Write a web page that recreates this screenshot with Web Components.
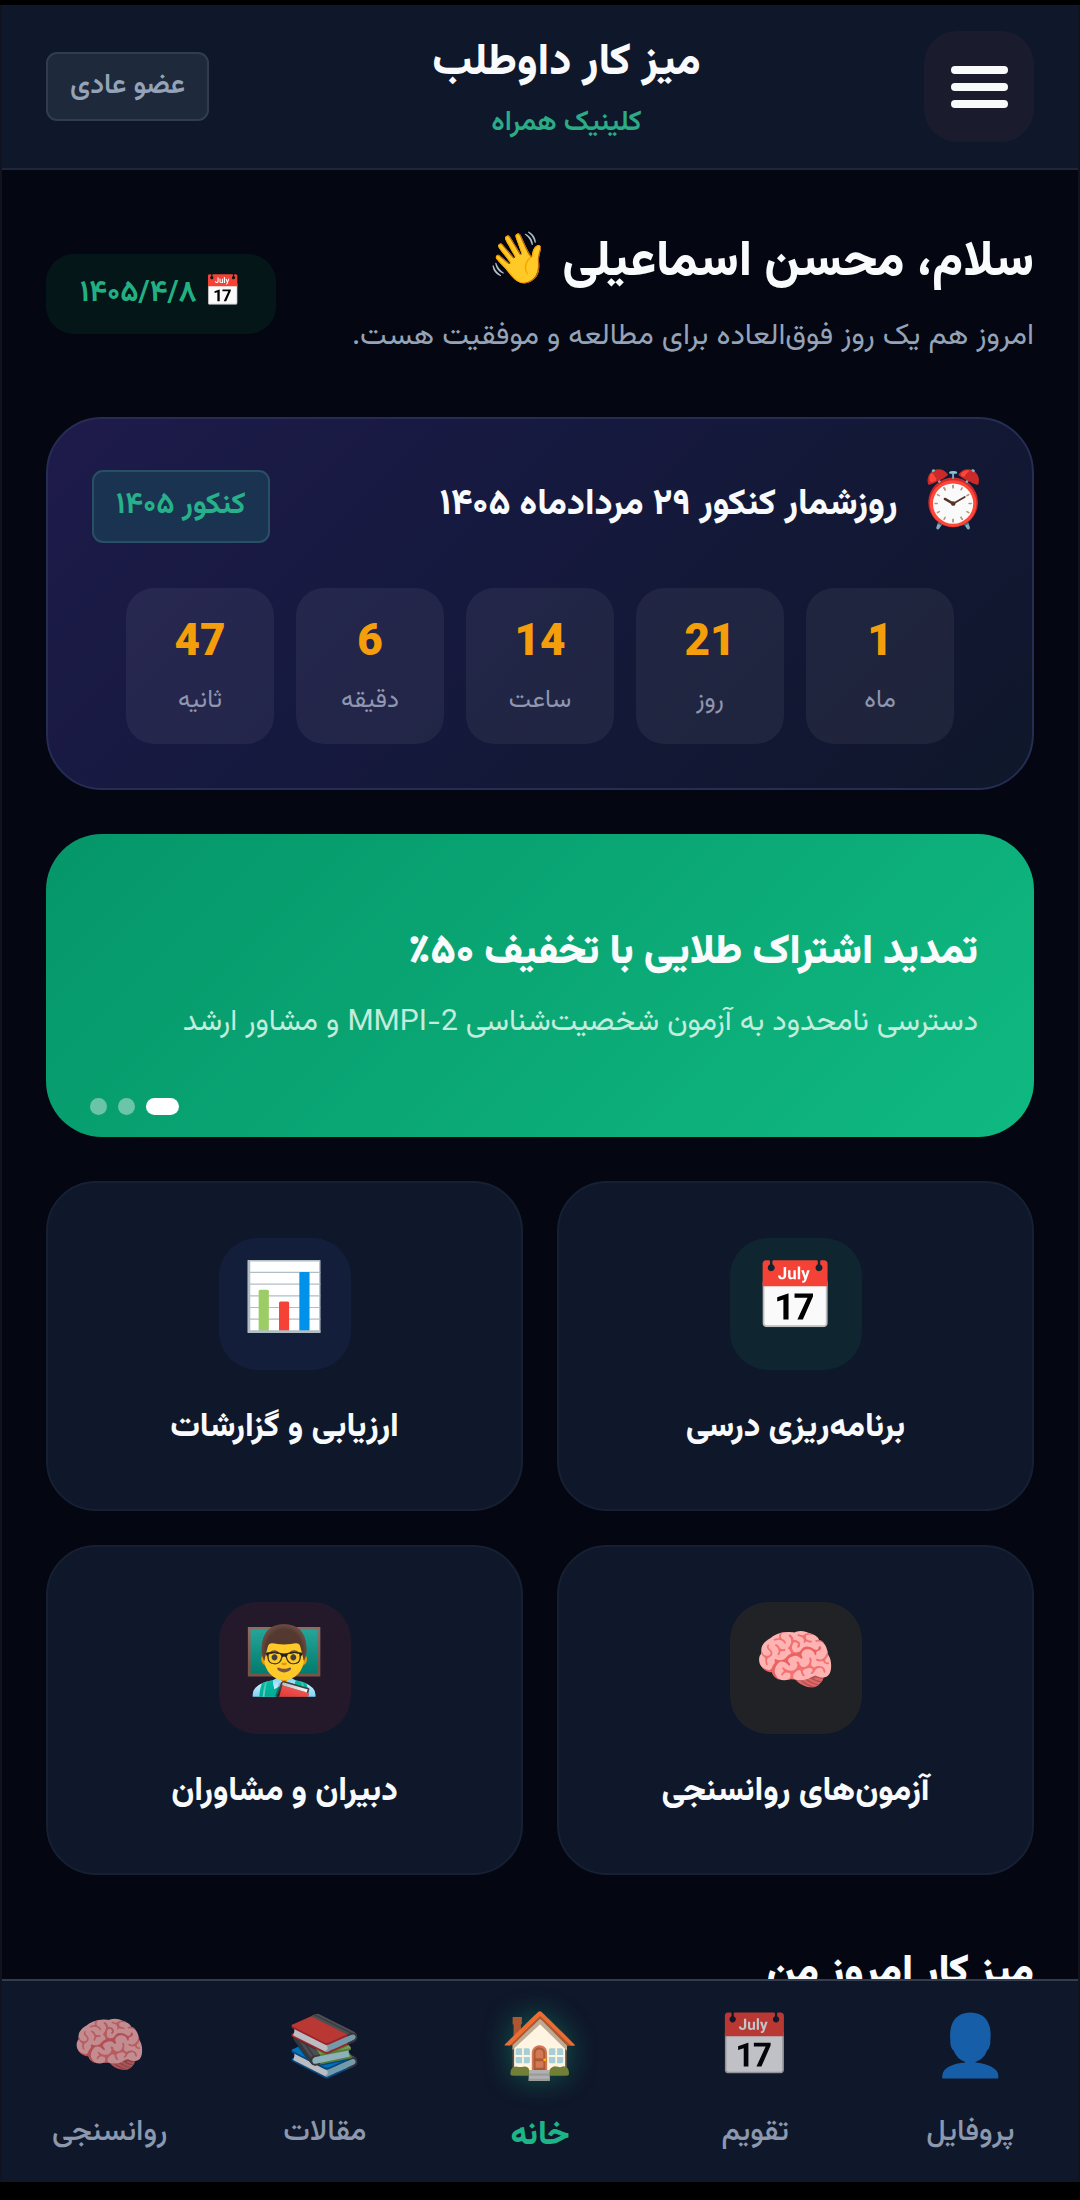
<!DOCTYPE html>
<html lang="fa" dir="rtl">
<head>
<meta charset="utf-8">
<meta name="viewport" content="width=device-width, initial-scale=1">
<title>میز کار داوطلب</title>
<style>
  :root {
    --bg: #040711;
    --surface: #0f172a;
    --line: #1e2637;
    --text: #f8fafc;
    --muted: #94a3b8;
    --green: #10b981;
    --amber: #f59e0b;
    --gutter: 44px;
  }
  body {
    margin: 0;
    background: #000;
    color: var(--text);
    font-family: Vazirmatn, "Noto Sans", "Noto Color Emoji", sans-serif;
  }
</style>
</head>
<body>

<desk-app>
  <desk-header slot="header" heading="میز کار داوطلب" sub="کلینیک همراه">
    <desk-badge slot="end">عضو عادی</desk-badge>
  </desk-header>

  <desk-greeting date="۱۴۰۵/۴/۸">
    <span slot="title">سلام، محسن اسماعیلی 👋</span>
    <span slot="sub">امروز هم یک روز فوق‌العاده برای مطالعه و موفقیت هست.</span>
  </desk-greeting>

  <desk-countdown heading="روزشمار کنکور ۲۹ مردادماه ۱۴۰۵">
    <desk-badge slot="badge" tone="green">کنکور ۱۴۰۵</desk-badge>
    <desk-count value="1">ماه</desk-count>
    <desk-count value="21">روز</desk-count>
    <desk-count value="14">ساعت</desk-count>
    <desk-count value="6">دقیقه</desk-count>
    <desk-count value="47">ثانیه</desk-count>
  </desk-countdown>

  <desk-banner>
    <span slot="title">تمدید اشتراک طلایی با تخفیف ۵۰٪</span>
    <span slot="sub">دسترسی نامحدود به آزمون شخصیت‌شناسی MMPI-2 و مشاور ارشد</span>
  </desk-banner>

  <desk-grid>
    <desk-feature icon="📅" style="--tint: #0f2530">برنامه‌ریزی درسی</desk-feature>
    <desk-feature icon="📊" style="--tint: #131e3b">ارزیابی و گزارشات</desk-feature>
    <desk-feature icon="🧠" style="--tint: #212226">آزمون‌های روانسنجی</desk-feature>
    <desk-feature icon="👨‍🏫" style="--tint: #23192b">دبیران و مشاوران</desk-feature>
  </desk-grid>

  <desk-section-title>میز کار امروز من</desk-section-title>

  <desk-nav slot="nav">
    <desk-nav-item icon="👤">پروفایل</desk-nav-item>
    <desk-nav-item icon="📅">تقویم</desk-nav-item>
    <desk-nav-item icon="🏠" active>خانه</desk-nav-item>
    <desk-nav-item icon="📚">مقالات</desk-nav-item>
    <desk-nav-item icon="🧠">روانسنجی</desk-nav-item>
  </desk-nav>
</desk-app>

<script>
'use strict';

/* ── Base: renders a template string into an open shadow root ── */
class DeskElement extends HTMLElement {
  constructor() {
    super();
    this.attachShadow({ mode: 'open' });
  }

  connectedCallback() {
    this.shadowRoot.innerHTML = `
      <style>
        *, :host { box-sizing: border-box; }
        h1, h2, h3, p { margin: 0; }
        button { font: inherit; color: inherit; border: 0; padding: 0; cursor: pointer; }
        a { color: inherit; text-decoration: none; }
      </style>
      ${this.template()}
    `;
  }

  attr(name) {
    return this.getAttribute(name) || '';
  }
}

class DeskApp extends DeskElement {
  template() {
    return `
      <style>
        :host {
          display: flex;
          flex-direction: column;
          height: 100vh;
          padding: 5px 0 18px;
        }
        .frame {
          flex: 1;
          min-height: 0;
          display: flex;
          flex-direction: column;
          background: var(--bg);
          border: solid #11141f;
          border-width: 0 2px;
        }
        main {
          flex: 1;
          min-height: 0;
          overflow: hidden;
          padding: var(--gutter);
          display: flex;
          flex-direction: column;
          gap: 44px;
        }
        ::slotted(*) { flex-shrink: 0; }
      </style>
      <div class="frame">
        <slot name="header"></slot>
        <main><slot></slot></main>
        <slot name="nav"></slot>
      </div>
    `;
  }
}

class DeskHeader extends DeskElement {
  template() {
    return `
      <style>
        :host {
          display: flex;
          align-items: center;
          justify-content: space-between;
          padding: 22px var(--gutter);
          background: var(--surface);
          border-bottom: 2px solid var(--line);
        }
        button {
          width: 110px;
          height: 111px;
          border-radius: 33px;
          background: #1a1c2e;
          display: flex;
          align-items: center;
          justify-content: center;
        }
        svg { display: block; }
        .titles { text-align: center; }
        h1 { font-size: 44px; font-weight: 800; line-height: 74px; }
        p { font-size: 28px; font-weight: 600; line-height: 45px; color: #2bab86; }
      </style>
      <button type="button" aria-label="منو">
        <svg width="58" height="44" viewBox="0 0 58 44" fill="#f8fafc">
          <rect x="1" y="1" width="57" height="8" rx="4"/>
          <rect x="1" y="18" width="57" height="8" rx="4"/>
          <rect x="1" y="35" width="57" height="8" rx="4"/>
        </svg>
      </button>
      <div class="titles">
        <h1>${this.attr('heading')}</h1>
        <p>${this.attr('sub')}</p>
      </div>
      <slot name="end"></slot>
    `;
  }
}

class DeskBadge extends DeskElement {
  template() {
    return `
      <style>
        :host {
          display: inline-block;
          padding: 10px 22px;
          border: 2px solid #313d4f;
          border-radius: 11px;
          background: #1e293b;
          color: var(--muted);
          font-size: 28px;
          font-weight: 600;
          line-height: 45px;
        }
        :host([tone="green"]) {
          padding: 11px 22px 13px;
          border-color: #285065;
          background: #1a3350;
          color: #26b18a;
          font-size: 30px;
          font-weight: 700;
        }
      </style>
      <slot></slot>
    `;
  }
}

class DeskGreeting extends DeskElement {
  template() {
    return `
      <style>
        :host {
          display: flex;
          align-items: center;
          justify-content: space-between;
        }
        .text { padding-bottom: 11px; }
        h2 { font-size: 50px; font-weight: 800; line-height: 98px; }
        p { font-size: 30px; line-height: 50px; color: var(--muted); }
        .date {
          padding: 16px 34px;
          border-radius: 28px;
          background: #051618;
          color: #22b083;
          font-size: 30px;
          font-weight: 700;
          line-height: 48px;
        }
      </style>
      <div class="text">
        <h2><slot name="title"></slot></h2>
        <p><slot name="sub"></slot></p>
      </div>
      <div class="date">📅 ${this.attr('date')}</div>
    `;
  }
}

class DeskCountdown extends DeskElement {
  template() {
    return `
      <style>
        :host {
          display: block;
          padding: 44px;
          border: 2px solid #262c54;
          border-radius: 56px;
          background: linear-gradient(135deg, #1e1b4b, #16193f 40%, #0f172a);
        }
        .head {
          display: flex;
          align-items: center;
          justify-content: space-between;
          height: 87px;
        }
        .title { display: flex; align-items: center; gap: 22px; align-self: flex-start; }
        .title span { font-size: 55px; line-height: 84px; }
        h3 { font-size: 36px; font-weight: 800; line-height: 84px; }
        .tiles {
          display: flex;
          justify-content: center;
          gap: 22px;
          margin-top: 38px;
        }
      </style>
      <div class="head">
        <div class="title">
          <span>⏰</span>
          <h3>${this.attr('heading')}</h3>
        </div>
        <slot name="badge"></slot>
      </div>
      <div class="tiles"><slot></slot></div>
    `;
  }
}

class DeskCount extends DeskElement {
  template() {
    return `
      <style>
        :host {
          flex: 0 1 148px;
          padding: 22px 0;
          border-radius: 28px;
          background: rgba(255, 255, 255, .06);
          text-align: center;
          font-size: 25px;
          line-height: 42px;
          color: #8f96b0;
        }
        b {
          display: block;
          font-size: 44px;
          font-weight: 900;
          line-height: 70px;
          color: var(--amber);
        }
      </style>
      <b>${this.attr('value')}</b>
      <slot></slot>
    `;
  }
}

class DeskBanner extends DeskElement {
  template() {
    return `
      <style>
        :host {
          position: relative;
          display: flex;
          flex-direction: column;
          justify-content: center;
          min-height: 303px;
          padding: 44px 56px 50px;
          border-radius: 56px;
          background: linear-gradient(135deg, #059669, #10b981);
        }
        h3 { font-size: 41px; font-weight: 900; line-height: 72px; }
        p { font-size: 30px; line-height: 52px; margin-top: 8px; color: #c3ecdd; }
        .dots {
          position: absolute;
          left: 44px;
          bottom: 22px;
          display: flex;
          gap: 11px;
        }
        .dots button {
          width: 17px;
          height: 17px;
          border-radius: 9px;
          background: rgba(255, 255, 255, .4);
        }
        .dots button.on { width: 33px; background: #fff; }
      </style>
      <h3><slot name="title"></slot></h3>
      <p><slot name="sub"></slot></p>
      <div class="dots">
        <button type="button" class="on" aria-label="۱"></button>
        <button type="button" aria-label="۲"></button>
        <button type="button" aria-label="۳"></button>
      </div>
    `;
  }
}

class DeskGrid extends DeskElement {
  template() {
    return `
      <style>
        :host {
          display: grid;
          grid-template-columns: 1fr 1fr;
          gap: 34px;
        }
      </style>
      <slot></slot>
    `;
  }
}

class DeskFeature extends DeskElement {
  template() {
    return `
      <style>
        :host { display: block; }
        a {
          display: flex;
          flex-direction: column;
          align-items: center;
          gap: 33px;
          padding: 55px 33px;
          border: 2px solid #172033;
          border-radius: 50px;
          background: var(--surface);
          font-size: 33px;
          font-weight: 800;
          line-height: 51px;
        }
        .icon {
          width: 132px;
          height: 132px;
          border-radius: 38px;
          background: var(--tint);
          font-size: 66px;
          line-height: 130px;
          text-align: center;
        }
      </style>
      <a href="#">
        <span class="icon">${this.attr('icon')}</span>
        <slot></slot>
      </a>
    `;
  }
}

class DeskSectionTitle extends DeskElement {
  template() {
    return `
      <style>
        :host { display: block; padding-top: 28px; }
        h2 { font-size: 41px; font-weight: 900; line-height: 52px; }
      </style>
      <h2><slot></slot></h2>
    `;
  }
}

class DeskNav extends DeskElement {
  template() {
    return `
      <style>
        :host {
          display: flex;
          background: var(--surface);
          border-top: 2px solid #343d4d;
        }
      </style>
      <slot></slot>
    `;
  }
}

class DeskNavItem extends DeskElement {
  template() {
    return `
      <style>
        :host { flex: 1; }
        a {
          display: flex;
          flex-direction: column;
          align-items: center;
          gap: 14px;
          padding: 26px 0 25px;
          color: #8b98ae;
          font-size: 30px;
          font-weight: 500;
          line-height: 48px;
        }
        .icon { font-size: 60px; line-height: 88px; opacity: .75; }
        :host([active]) a {
          padding-bottom: 19px;
          color: #1db588;
          font-size: 33px;
          font-weight: 800;
          line-height: 54px;
        }
        :host([active]) .icon {
          font-size: 64px;
          line-height: 88px;
          opacity: 1;
          filter: drop-shadow(0 0 14px rgba(16, 185, 129, .4));
        }
      </style>
      <a href="#">
        <span class="icon">${this.attr('icon')}</span>
        <slot></slot>
      </a>
    `;
  }
}

customElements.define('desk-app', DeskApp);
customElements.define('desk-header', DeskHeader);
customElements.define('desk-badge', DeskBadge);
customElements.define('desk-greeting', DeskGreeting);
customElements.define('desk-countdown', DeskCountdown);
customElements.define('desk-count', DeskCount);
customElements.define('desk-banner', DeskBanner);
customElements.define('desk-grid', DeskGrid);
customElements.define('desk-feature', DeskFeature);
customElements.define('desk-section-title', DeskSectionTitle);
customElements.define('desk-nav', DeskNav);
customElements.define('desk-nav-item', DeskNavItem);
</script>
</body>
</html>
